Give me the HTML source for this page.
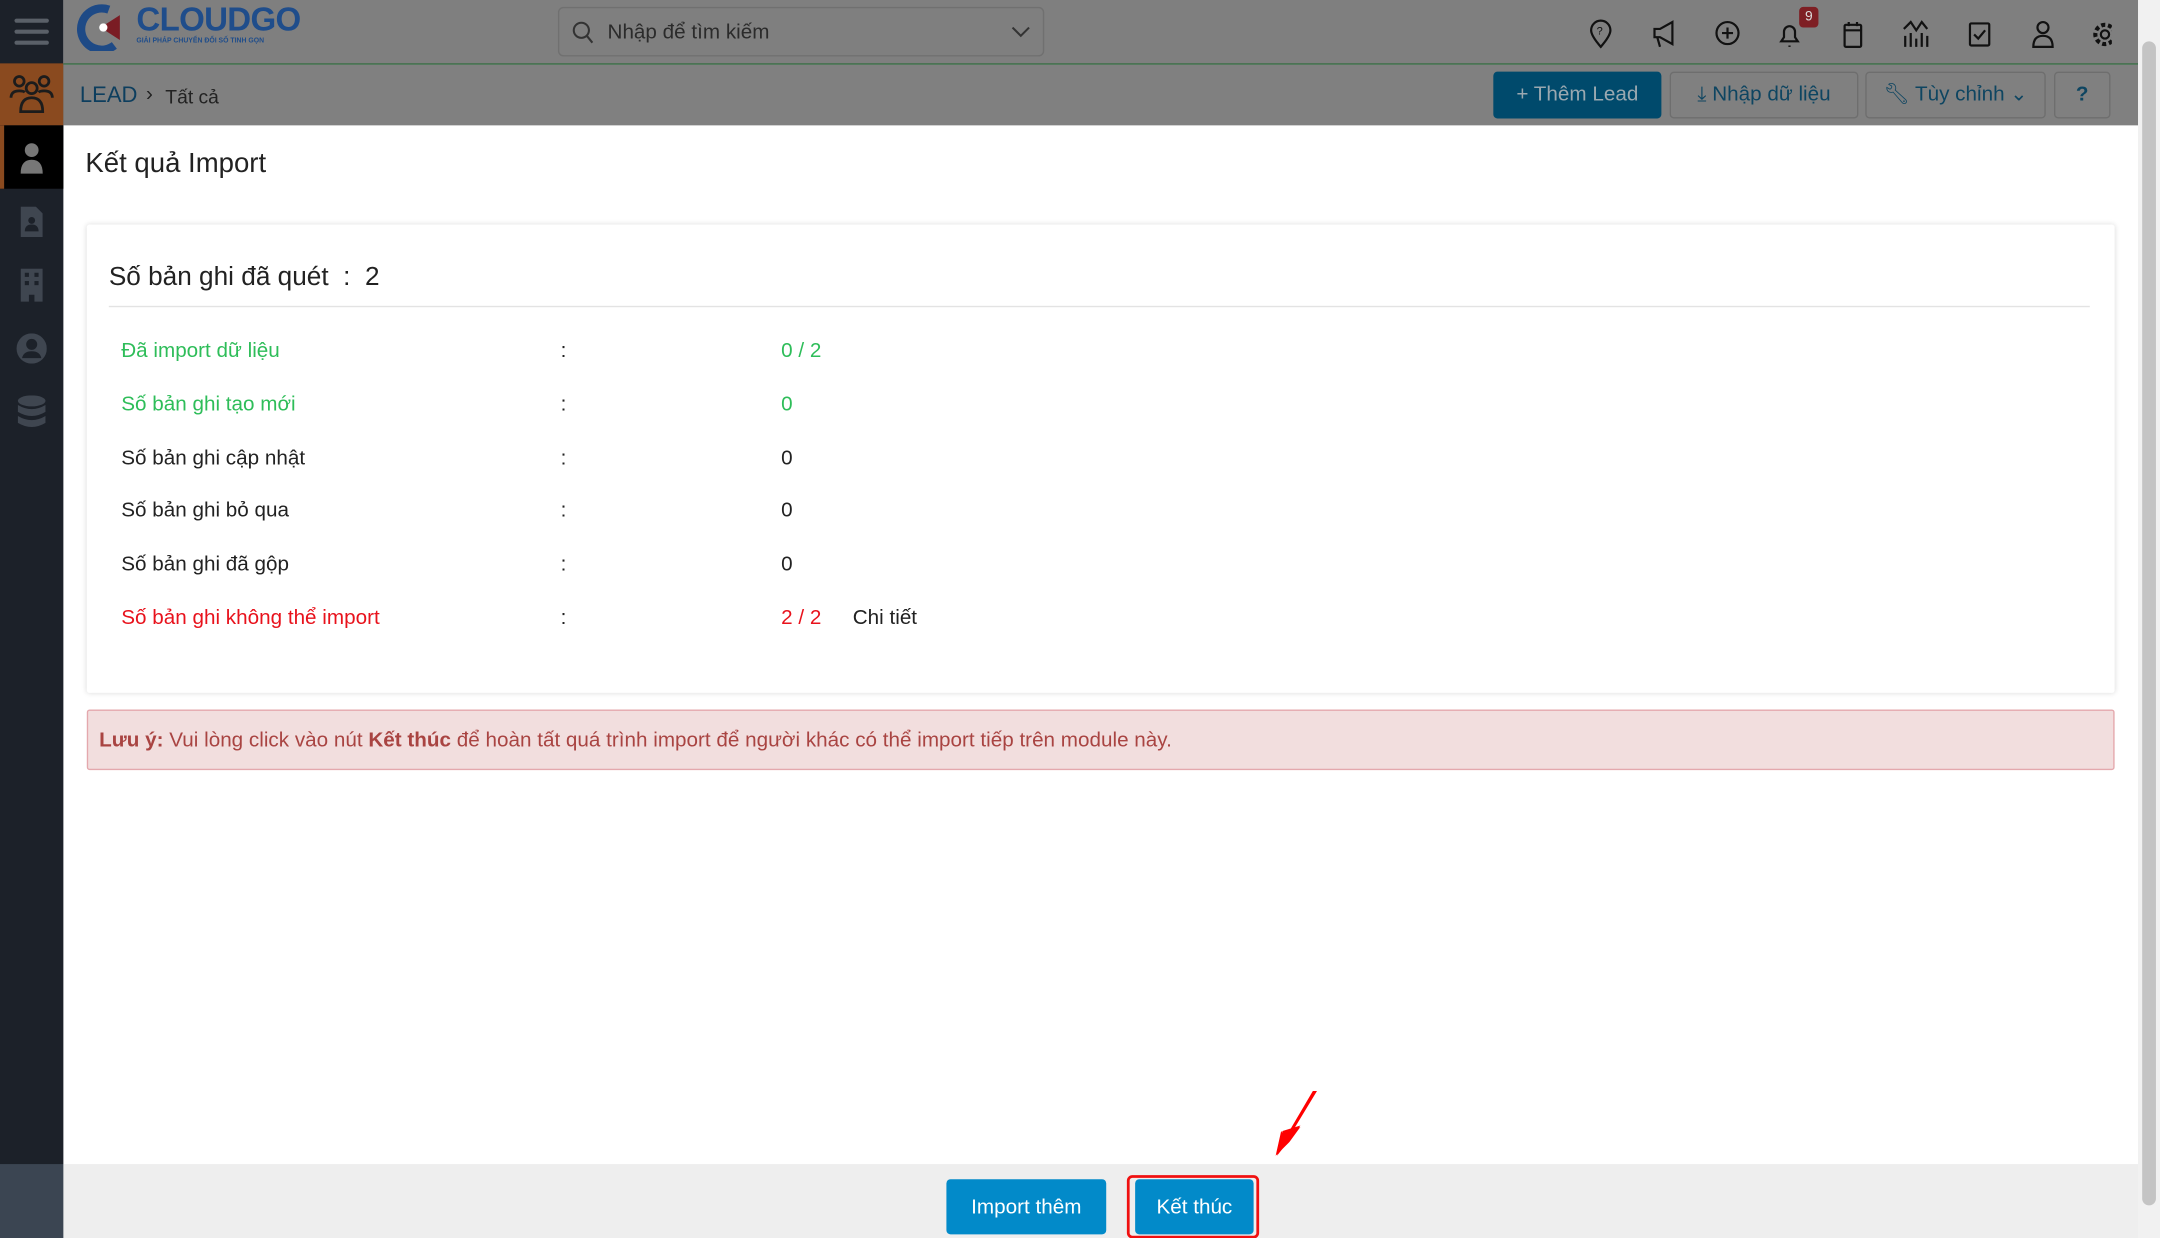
<!DOCTYPE html>
<html><head><meta charset="utf-8"><style>
html,body{margin:0;padding:0;width:2160px;height:1238px;overflow:hidden;background:#fff;font-family:"Liberation Sans","Noto Sans CJK SC",sans-serif;}
#w{position:absolute;left:0;top:0;width:1568px;height:899px;transform:scale(1.3776);transform-origin:0 0;}
.a{position:absolute;}
.side{left:0;top:0;width:46px;height:899px;background:#1c2129;}
.hdr{left:46px;top:0;width:1506px;height:46px;background:#7f7f7f;border-bottom:1px solid #2f6b3c;}
.sub{left:46px;top:47px;width:1506px;height:44px;background:#808080;}
.btn{position:absolute;top:52px;height:34px;border:1px solid #6e6e6e;border-radius:3px;box-sizing:border-box;color:#0e4561;font-size:15px;line-height:32px;text-align:center;}
.row{position:absolute;left:88px;font-size:15px;color:#222;}
.ic{position:absolute;top:14px;}
</style></head><body><div id="w">
<div class="a side"></div>
<div class="a" style="left:0;top:46px;width:46px;height:45px;background:#8a4a1f"></div>
<div class="a" style="left:0;top:91px;width:46px;height:46px;background:#000;border-left:3px solid #8a4a1f;box-sizing:border-box"></div>
<div class="a" style="left:0;top:845px;width:46px;height:54px;background:#3b4552"></div>
<svg class="a" style="left:10px;top:12px" width="26" height="22"><g stroke="#5a6068" stroke-width="3" stroke-linecap="round"><line x1="2" y1="3" x2="24" y2="3"/><line x1="2" y1="11" x2="24" y2="11"/><line x1="2" y1="19" x2="24" y2="19"/></g></svg>
<svg class="a" style="left:6px;top:53px" width="34" height="30" fill="none" stroke="#1c1c1c" stroke-width="2"><circle cx="8" cy="6" r="3.5"/><circle cx="26" cy="6" r="3.5"/><circle cx="17" cy="11" r="4"/><path d="M2 18q0-5 6-5 3 0 4 1M32 18q0-5-6-5-3 0-4 1M9 28q0-10 8-10t8 10z"/></svg>
<svg class="a" style="left:14px;top:103px" width="18" height="24" fill="#777"><circle cx="9" cy="6" r="5"/><path d="M1 23q0-10 8-10t8 10z"/></svg>
<svg class="a" style="left:15px;top:150px" width="16" height="22" fill="#3f4650"><path d="M0 0h11l5 5v17H0z"/><circle cx="8" cy="10" r="2.5" fill="#1c2129"/><path d="M3 18q0-5 5-5t5 5z" fill="#1c2129"/></svg>
<svg class="a" style="left:15px;top:195px" width="16" height="24" fill="#3f4650"><path d="M0 0h16v24H10v-5H6v5H0z"/><g fill="#1c2129"><rect x="3" y="3" width="3" height="3"/><rect x="10" y="3" width="3" height="3"/><rect x="3" y="9" width="3" height="3"/><rect x="10" y="9" width="3" height="3"/></g></svg>
<svg class="a" style="left:12px;top:242px" width="22" height="22"><circle cx="11" cy="11" r="11" fill="#3f4650"/><circle cx="11" cy="8" r="4" fill="#1c2129"/><path d="M4 18q1-5 7-5t7 5" fill="#1c2129"/></svg>
<svg class="a" style="left:12px;top:287px" width="22" height="24" fill="#3f4650"><ellipse cx="11" cy="4" rx="10" ry="4"/><path d="M1 7q10 6 20 0v5q-10 6-20 0zM1 15q10 6 20 0v5q-10 6-20 0z"/></svg>
<div class="a hdr"></div>
<svg class="a" style="left:53px;top:3px" width="42" height="34"><path d="M26 4A15 15 0 1 0 30 30" fill="none" stroke="#1e4a86" stroke-width="6"/><path d="M20 17l14-9v18z" fill="#7a1c24"/><circle cx="22" cy="17" r="3" fill="#fff"/></svg>
<div class="a" style="left:99px;top:1px;font-size:24px;font-weight:bold;color:#1f4d8b;letter-spacing:-0.5px">CLOUDGO</div>
<div class="a" style="left:99px;top:27px;font-size:5px;font-weight:bold;color:#1f4d8b">GIẢI PHÁP CHUYỂN ĐỔI SỐ TINH GỌN</div>
<div class="a" style="left:405px;top:5px;width:353px;height:36px;border:1px solid #707070;border-radius:4px;box-sizing:border-box"></div>
<svg class="a" style="left:415px;top:15px" width="16" height="18" fill="none" stroke="#333" stroke-width="1.5"><circle cx="7" cy="7" r="5.5"/><line x1="11" y1="11" x2="15" y2="16"/></svg>
<div class="a" style="left:441px;top:15px;font-size:15px;color:#2b2b2b">Nhập để tìm kiếm</div>
<svg class="a" style="left:734px;top:19px" width="14" height="9" fill="none" stroke="#333" stroke-width="1.5"><path d="M1 1l6 6 6-6"/></svg>
<svg class="ic" style="left:1153px" width="380" height="22" fill="none" stroke="#111" stroke-width="1.6">
<path d="M9 20q-7-8-7-12a7 7 0 0 1 14 0q0 4-7 12z"/><text x="6" y="11" font-size="8" fill="#111" stroke="none">?</text>
<path d="M48 7h4l9-5v16l-9-5h-4zM50 13l2 7"/>
<circle cx="101" cy="10" r="8"/><path d="M101 6v8M97 10h8"/>
<path d="M140 16h12l-2-3v-4a4 4 0 0 0-8 0v4zM146 19v1"/>
<rect x="186" y="4" width="12" height="16" rx="1"/><path d="M186 8h12M189 2v3M195 2v3"/>
<path d="M230 20v-8M234 20v-10M238 20v-6M242 20v-10M246 20v-8M229 7l5-5 4 6 4-6 4 5"/>
<rect x="277" y="3" width="14" height="16" rx="1"/><path d="M280 11l3 3 5-6"/>
<circle cx="330" cy="6" r="4"/><path d="M323 20q0-8 7-8t7 8z"/>
<circle cx="375" cy="11" r="3"/><circle cx="375" cy="11" r="7" stroke-dasharray="3 2" stroke-width="3"/>
</svg>
<div class="a" style="left:1306px;top:5px;width:14px;height:15px;background:#7e1f24;border-radius:3px;color:#ddd;font-size:10px;text-align:center;line-height:15px">9</div>
<div class="a sub"></div>
<div class="a" style="left:58px;top:61px;font-size:16px;color:#0d3e5e">LEAD</div>
<div class="a" style="left:106px;top:60px;font-size:15px;color:#222">›</div>
<div class="a" style="left:120px;top:62px;font-size:14px;color:#222">Tất cả</div>
<div class="btn" style="left:1084px;width:122px;background:#004a6c;border-color:#004a6c;color:#9aa8b0">+ Thêm Lead</div>
<div class="btn" style="left:1212px;width:137px">⤓ Nhập dữ liệu</div>
<div class="btn" style="left:1354px;width:131px">🔧︎ Tùy chỉnh ⌄</div>
<div class="btn" style="left:1491px;width:41px;font-weight:bold">?</div>
<div class="a" style="left:1552px;top:0;width:16px;height:899px;background:#f1f1f1"></div>
<div class="a" style="left:1555px;top:30px;width:10px;height:845px;background:#c4c4c4;border-radius:5px"></div>
<div class="a" style="left:62px;top:108px;font-size:20px;color:#222">Kết quả Import</div>
<div class="a" style="left:63px;top:163px;width:1472px;height:340px;background:#fff;box-shadow:0 0 4px rgba(0,0,0,.15);border-radius:2px"></div>
<div class="a" style="left:79px;top:191px;font-size:19px;color:#222">Số bản ghi đã quét &nbsp;: &nbsp;2</div>
<div class="a" style="left:79px;top:222px;width:1438px;height:1px;background:#e3e3e3"></div>
<div class="row" style="top:246px;color:#2ebd59">Đã import dữ liệu</div>
<div class="row" style="top:285px;color:#2ebd59">Số bản ghi tạo mới</div>
<div class="row" style="top:324px">Số bản ghi cập nhật</div>
<div class="row" style="top:362px">Số bản ghi bỏ qua</div>
<div class="row" style="top:401px">Số bản ghi đã gộp</div>
<div class="row" style="top:440px;color:#e8121c">Số bản ghi không thể import</div>
<div class="row" style="left:407px;top:246px">:</div><div class="row" style="left:407px;top:285px">:</div><div class="row" style="left:407px;top:324px">:</div><div class="row" style="left:407px;top:362px">:</div><div class="row" style="left:407px;top:401px">:</div><div class="row" style="left:407px;top:440px">:</div>
<div class="row" style="left:567px;top:246px;color:#2ebd59">0 / 2</div>
<div class="row" style="left:567px;top:285px;color:#2ebd59">0</div>
<div class="row" style="left:567px;top:324px">0</div>
<div class="row" style="left:567px;top:362px">0</div>
<div class="row" style="left:567px;top:401px">0</div>
<div class="row" style="left:567px;top:440px;color:#e8121c">2 / 2</div>
<div class="row" style="left:619px;top:440px">Chi tiết</div>
<div class="a" style="left:63px;top:515px;width:1472px;height:44px;background:#f2dede;border:1px solid #e4a8ad;box-sizing:border-box;border-radius:2px"></div>
<div class="a" style="left:72px;top:529px;font-size:15px;color:#a94442"><b>Lưu ý:</b> Vui lòng click vào nút <b>Kết thúc</b> để hoàn tất quá trình import để người khác có thể import tiếp trên module này.</div>
<div class="a" style="left:46px;top:845px;width:1506px;height:54px;background:#eeeeee"></div>
<div class="a" style="left:687px;top:856px;width:116px;height:40px;background:#028ac9;border-radius:3px;color:#fff;font-size:15px;text-align:center;line-height:42px">Import thêm</div>
<div class="a" style="left:818px;top:853px;width:96px;height:46px;border:2px solid #f01010;border-radius:4px;box-sizing:border-box"></div>
<div class="a" style="left:824px;top:856px;width:86px;height:40px;background:#028ac9;border-radius:3px;color:#fff;font-size:15px;text-align:center;line-height:42px">Kết thúc</div>
<svg class="a" style="left:915px;top:788px" width="45" height="55"><path d="M41 4L24 32l5-2-8 11-10 10 4-18 3 5 20-34z" fill="#f00"/><path d="M12 51l4-18 13-4z" fill="#f00"/></svg>
</div></body></html>
